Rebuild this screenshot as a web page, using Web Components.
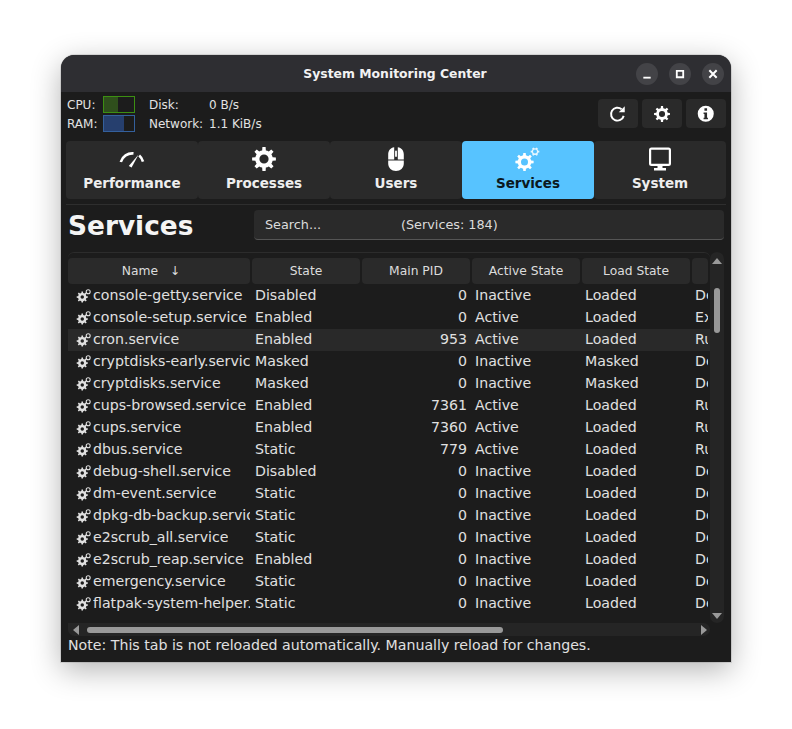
<!DOCTYPE html>
<html>
<head>
<meta charset="utf-8">
<title>System Monitoring Center</title>
<style>
  html, body { margin: 0; background: #fff; }
  body { font-family: "DejaVu Sans", sans-serif; min-height: 729px; }
</style>
</head>
<body>
<monitor-window></monitor-window>
<script>
//shape of a gear as a path: teeth on the outside, round hole in the middle
function gearPath(cx, cy, outer, inner, hole, teeth) {
  let d = '';
  const step = Math.PI * 2 / teeth;
  for (let i = 0; i < teeth; i++) {
    const a = i * step;
    const pts = [
      [inner, a - step * 0.5], [inner, a - step * 0.27],
      [outer, a - step * 0.17], [outer, a + step * 0.17],
      [inner, a + step * 0.27]
    ];
    pts.forEach((p, j) => {
      const x = (cx + p[0] * Math.cos(p[1])).toFixed(2);
      const y = (cy + p[0] * Math.sin(p[1])).toFixed(2);
      d += (i === 0 && j === 0 ? 'M' : 'L') + x + ' ' + y;
    });
  }
  d += 'Z';
  d += `M${cx - hole} ${cy}a${hole} ${hole} 0 1 0 ${hole * 2} 0a${hole} ${hole} 0 1 0 ${-hole * 2} 0Z`;
  return d;
}

const ICONS = {
  gauge: `<path d="M0.8 15 A12 12 0 0 1 13.5 6.4" fill="none" stroke="currentColor" stroke-width="2.6"/>
          <path d="M19.2 8.6 A12 12 0 0 1 23 14.6" fill="none" stroke="currentColor" stroke-width="2.6"/>
          <path d="M18.6 7.4 L11.6 20.4 L8.8 19Z" fill="currentColor"/>`,
  gear: `<path d="${gearPath(12, 12, 12, 8.8, 4.6, 8)}" fill="currentColor" fill-rule="evenodd"/>`,
  mouse: `<path d="M10.2 0.2 V12.4 H4.2 V7.5 C4.2 3.4 6.6 0.6 10.2 0.2Z M13.8 0.2 C17.4 0.6 19.8 3.4 19.8 7.5 V12.4 H13.8Z M4.2 13.6 H19.8 V16.5 C19.8 21 16.4 24 12 24 C7.6 24 4.2 21 4.2 16.5Z" fill="currentColor"/>
          <rect x="11.1" y="3.5" width="1.8" height="6.5" rx=".9" fill="currentColor"/>`,
  services: `<path d="${gearPath(8.5, 15, 9.2, 6.8, 3.5, 8)}" fill="currentColor" fill-rule="evenodd"/>
             <path d="${gearPath(19, 4.6, 4.4, 3.4, 2, 6)}" fill="currentColor" fill-rule="evenodd" opacity=".85"/>`,
  monitor: `<path d="M3.5 0.5 H20.5 A2.5 2.5 0 0 1 23 3 V16.5 A2.5 2.5 0 0 1 20.5 19 H3.5 A2.5 2.5 0 0 1 1 16.5 V3 A2.5 2.5 0 0 1 3.5 0.5Z M3.2 2.7 V16.8 H20.8 V2.7Z" fill="currentColor" fill-rule="evenodd"/>
            <path d="M9.5 19 H14.5 V21 H18 V23.5 H6 V21 H9.5Z" fill="currentColor"/>`,
  refresh: `<path d="M19.6 14.5 A8.6 8.6 0 1 1 16.8 5.6" fill="none" stroke="currentColor" stroke-width="2.6"/>
            <path d="M13 9.8 H21 V1.8Z" fill="currentColor"/>`,
  info: `<path fill-rule="evenodd" fill="currentColor" d="M12 1 A11 11 0 1 1 12 23 A11 11 0 1 1 12 1Z M10.2 4.6 V8 H13.8 V4.6Z M9 10.2 V12.2 H10.2 V17.4 H9 V19.4 H15 V17.4 H13.8 V10.2Z"/>`,
  service: `<path d="${gearPath(9, 15.5, 9.6, 7.2, 3, 8)}" fill="currentColor" fill-rule="evenodd"/>
            <circle cx="19.2" cy="6.5" r="3.4" fill="none" stroke="currentColor" stroke-width="1.9"/>`,
  minimize: `<rect x="8" y="15" width="8" height="2" fill="currentColor"/>`,
  maximize: `<path d="M7.5 7.5 H16.5 V16.5 H7.5Z M9.5 9.5 V14.5 H14.5 V9.5Z" fill="currentColor" fill-rule="evenodd"/>`,
  close: `<path d="M8 8 L16 16 M16 8 L8 16" stroke="currentColor" stroke-width="2.2"/>`
};

//иконка: size берётся из атрибута, цвет наследуется
class AppIcon extends HTMLElement {
  connectedCallback() {
    const size = this.getAttribute('size') || 24;
    this.attachShadow({ mode: 'open' }).innerHTML = `
      <style>
        :host { display: block; width: ${size}px; height: ${size}px; flex: none; }
        svg { display: block; width: 100%; height: 100%; overflow: visible; }
      </style>
      <svg viewBox="0 0 24 24">${ICONS[this.getAttribute('name')]}</svg>`;
  }
}
customElements.define('app-icon', AppIcon);

class WindowButton extends HTMLElement {
  connectedCallback() {
    this.attachShadow({ mode: 'open' }).innerHTML = `
      <style>
        :host { display: flex; align-items: center; justify-content: center; width: 22px; height: 22px;
                border-radius: 50%; background: #434347; color: #fff; }
      </style>
      <app-icon name="${this.getAttribute('icon')}" size="22"></app-icon>`;
  }
}
customElements.define('window-button', WindowButton);

class TitleBar extends HTMLElement {
  connectedCallback() {
    this.attachShadow({ mode: 'open' }).innerHTML = `
      <style>
        :host { display: grid; grid-template-columns: 1fr auto 1fr; align-items: center; height: 37px;
                background: #2e2e32; color: #f2f2f2; font-weight: 700; font-size: 12.4px; padding: 0 7px;
                border-radius: 13px 13px 0 0; box-sizing: border-box; }
        .btns { grid-column: 3; display: flex; gap: 11px; justify-content: flex-end; }
        span { grid-column: 2; margin-left: -2px; }
      </style>
      <span><slot></slot></span>
      <div class="btns">
        <window-button icon="minimize"></window-button>
        <window-button icon="maximize"></window-button>
        <window-button icon="close"></window-button>
      </div>`;
  }
}
customElements.define('title-bar', TitleBar);

//маленький индикатор загрузки cpu/ram
class UsageBar extends HTMLElement {
  connectedCallback() {
    const c = this.getAttribute('color');
    const fill = this.getAttribute('fill');
    const value = this.getAttribute('value');
    this.attachShadow({ mode: 'open' }).innerHTML = `
      <style>
        :host { display: block; width: 32px; height: 17px; box-sizing: border-box; border: 1px solid ${c}; background: #1c1c1c; }
        div { height: 100%; width: ${value}%; background: ${fill}; }
      </style>
      <div></div>`;
  }
}
customElements.define('usage-bar', UsageBar);

class SummaryPanel extends HTMLElement {
  connectedCallback() {
    this.attachShadow({ mode: 'open' }).innerHTML = `
      <style>
        :host { display: grid; grid-template-columns: 36px 32px 14px 60px auto; grid-auto-rows: 17px; row-gap: 2px;
                align-items: center; font-size: 12px; color: #e2e2e2; margin-left: 1px; }
      </style>
      <span>CPU:</span><usage-bar color="#3c8f12" fill="#2f4f1c" value="48"></usage-bar><i></i><span>Disk:</span><span>0 B/s</span>
      <span>RAM:</span><usage-bar color="#34609c" fill="#263f6e" value="68"></usage-bar><i></i><span>Network:</span><span>1.1 KiB/s</span>`;
  }
}
customElements.define('summary-panel', SummaryPanel);

class IconButton extends HTMLElement {
  connectedCallback() {
    const size = this.getAttribute('size') || 18;
    this.attachShadow({ mode: 'open' }).innerHTML = `
      <style>
        :host { display: flex; align-items: center; justify-content: center; width: 40px; height: 29px;
                background: #2a2a2a; border-radius: 4px; color: #fff; }
      </style>
      <app-icon name="${this.getAttribute('icon')}" size="${size}"></app-icon>`;
  }
}
customElements.define('icon-button', IconButton);

class TabButton extends HTMLElement {
  connectedCallback() {
    const active = this.hasAttribute('active');
    this.attachShadow({ mode: 'open' }).innerHTML = `
      <style>
        :host { display: flex; flex-direction: column; align-items: center; width: 132px; height: 58px;
                box-sizing: border-box; border-radius: 4px; font-size: 13.5px; font-weight: 700;
                border: 1px solid transparent; padding-top: 5px;
                background: ${active ? '#57c3ff' : '#2a2a2a'}; color: ${active ? '#0b1820' : '#eee'}; }
        app-icon { color: #fff; margin-bottom: 4px; }
      </style>
      <app-icon name="${this.getAttribute('icon')}" size="24"></app-icon>
      <slot></slot>`;
  }
}
customElements.define('tab-button', TabButton);

const SERVICES = [
  ['console-getty.service', 'Disabled', 0, 'Inactive', 'Loaded', 'Dead'],
  ['console-setup.service', 'Enabled', 0, 'Active', 'Loaded', 'Exited'],
  ['cron.service', 'Enabled', 953, 'Active', 'Loaded', 'Running'],
  ['cryptdisks-early.service', 'Masked', 0, 'Inactive', 'Masked', 'Dead'],
  ['cryptdisks.service', 'Masked', 0, 'Inactive', 'Masked', 'Dead'],
  ['cups-browsed.service', 'Enabled', 7361, 'Active', 'Loaded', 'Running'],
  ['cups.service', 'Enabled', 7360, 'Active', 'Loaded', 'Running'],
  ['dbus.service', 'Static', 779, 'Active', 'Loaded', 'Running'],
  ['debug-shell.service', 'Disabled', 0, 'Inactive', 'Loaded', 'Dead'],
  ['dm-event.service', 'Static', 0, 'Inactive', 'Loaded', 'Dead'],
  ['dpkg-db-backup.service', 'Static', 0, 'Inactive', 'Loaded', 'Dead'],
  ['e2scrub_all.service', 'Static', 0, 'Inactive', 'Loaded', 'Dead'],
  ['e2scrub_reap.service', 'Enabled', 0, 'Inactive', 'Loaded', 'Dead'],
  ['emergency.service', 'Static', 0, 'Inactive', 'Loaded', 'Dead'],
  ['flatpak-system-helper.service', 'Static', 0, 'Inactive', 'Loaded', 'Dead']
];

class ServiceTable extends HTMLElement {
  connectedCallback() {
    const rows = SERVICES.map((s, i) => `
      <div class="row${i === 2 ? ' hover' : ''}">
        <div class="cell name"><app-icon name="service" size="14"></app-icon><span>${s[0]}</span></div>
        <div class="cell">${s[1]}</div>
        <div class="cell num">${s[2]}</div>
        <div class="cell">${s[3]}</div>
        <div class="cell">${s[4]}</div>
        <div class="cell">${s[5]}</div>
      </div>`).join('');
    this.attachShadow({ mode: 'open' }).innerHTML = `
      <style>
        :host { display: grid; grid-template-columns: 642px 14px; grid-template-rows: 371px 13px; margin: 0 2px;
                font-size: 14.16px; color: #e0e0e0; }
        .view { overflow: hidden; border-top: 1px solid #2c2c2c; border-radius: 6px 6px 0 0; padding-right: 3px; box-sizing: border-box; }
        .head, .row { display: grid; grid-template-columns: 182px 108px 108px 108px 108px 16px; column-gap: 2px; }
        .head { height: 26px; margin-top: 5px; margin-bottom: 1px; font-size: 12.3px; }
        .head div { background: #2a2a2a; border-radius: 4px; display: flex; align-items: center; justify-content: center; color: #dcdcdc; white-space: pre; }
        .head .sorted { padding-right: 16px; box-sizing: border-box; }
        .row { height: 22px; align-items: center; margin-right: -3px; }
        .row.hover { background: #292929; }
        .cell { overflow: hidden; white-space: nowrap; padding: 0 0 2px 3px; box-sizing: border-box; }
        .name { display: flex; align-items: center; padding-left: 9px; gap: 2px; color: #e0e0e0; }
        .name span { min-width: 0; overflow: hidden; }
        .num { text-align: right; padding: 0 3px 2px 0; }
        .vbar { background: #252525; border-radius: 7px; display: flex; flex-direction: column; align-items: center; }
        .hbar { background: #252525; border-radius: 0 7px 7px 7px; display: flex; align-items: center; }
        .vthumb { width: 6px; height: 45px; margin-top: 24px; background: #999; border-radius: 3px; }
        .hthumb { height: 6px; width: 416px; margin-left: 8px; background: #999; border-radius: 3px; }
        .arrow { width: 0; height: 0; border: 5px solid transparent; flex: none; }
        .up { border-bottom: 6px solid #999; border-top: 0; margin-top: 6px; }
        .down { border-top: 6px solid #999; border-bottom: 0; margin-top: auto; margin-bottom: 4px; }
        .left { border-right: 6px solid #999; border-left: 0; margin-left: 5px; }
        .right { border-left: 6px solid #999; border-right: 0; margin-left: auto; margin-right: 3px; }
      </style>
      <div class="view">
        <div class="head">
          <div class="sorted">Name   ↓</div><div>State</div><div>Main PID</div><div>Active State</div><div>Load State</div><div></div>
        </div>
        <div>${rows}</div>
      </div>
      <div class="vbar"><div class="arrow up"></div><div class="vthumb"></div><div class="arrow down"></div></div>
      <div class="hbar"><div class="arrow left"></div><div class="hthumb"></div><div class="arrow right"></div></div>`;
  }
}
customElements.define('service-table', ServiceTable);

class MonitorWindow extends HTMLElement {
  connectedCallback() {
    this.attachShadow({ mode: 'open' }).innerHTML = `
      <style>
        :host { display: block; width: 670px; margin: 0 0 0 61px; position: relative; top: 55px; height: 607px; background: #1c1c1c;
                border-radius: 14px 14px 0 0; font-family: "DejaVu Sans", sans-serif; color: #e0e0e0;
                box-shadow: 0 8px 30px rgba(0,0,0,.3), 0 0 0 1px rgba(0,0,0,.1); }
        .content { padding: 0 5px; }
        .top { display: flex; justify-content: space-between; height: 49px; padding-top: 4px; box-sizing: border-box; }
        .tools { display: flex; gap: 4px; margin-top: 3px; }
        .tabs { display: flex; border-bottom: 1px solid #2e2e2e; padding-bottom: 5px; }
        .title-row { display: flex; height: 30px; margin: 5px 2px 12px; align-items: center; }
        h1 { margin: 0; font-size: 26.4px; font-weight: 700; color: #f4f4f4; width: 186px; }
        .search { width: 470px; height: 30px; box-sizing: border-box; background: #2a2a2a; border-radius: 4px;
                  border-bottom: 1px solid #555; display: grid; grid-template-columns: 136px 1fr; align-items: center;
                  padding: 0 11px; font-size: 12.8px; color: #dcdcdc; }
        .note { font-size: 14.16px; margin: 0 2px; line-height: 18px; color: #e0e0e0; }
      </style>
      <title-bar>System Monitoring Center</title-bar>
      <div class="content">
        <div class="top">
          <summary-panel></summary-panel>
          <div class="tools">
            <icon-button icon="refresh" size="18"></icon-button>
            <icon-button icon="gear" size="16"></icon-button>
            <icon-button icon="info" size="17.5"></icon-button>
          </div>
        </div>
        <div class="tabs">
          <tab-button icon="gauge">Performance</tab-button>
          <tab-button icon="gear">Processes</tab-button>
          <tab-button icon="mouse">Users</tab-button>
          <tab-button icon="services" active>Services</tab-button>
          <tab-button icon="monitor">System</tab-button>
        </div>
        <div class="title-row">
          <h1>Services</h1>
          <div class="search"><span>Search...</span><span>(Services: 184)</span></div>
        </div>
        <service-table></service-table>
        <div class="note">Note: This tab is not reloaded automatically. Manually reload for changes.</div>
      </div>`;
  }
}
customElements.define('monitor-window', MonitorWindow);
</script>
</body>
</html>
